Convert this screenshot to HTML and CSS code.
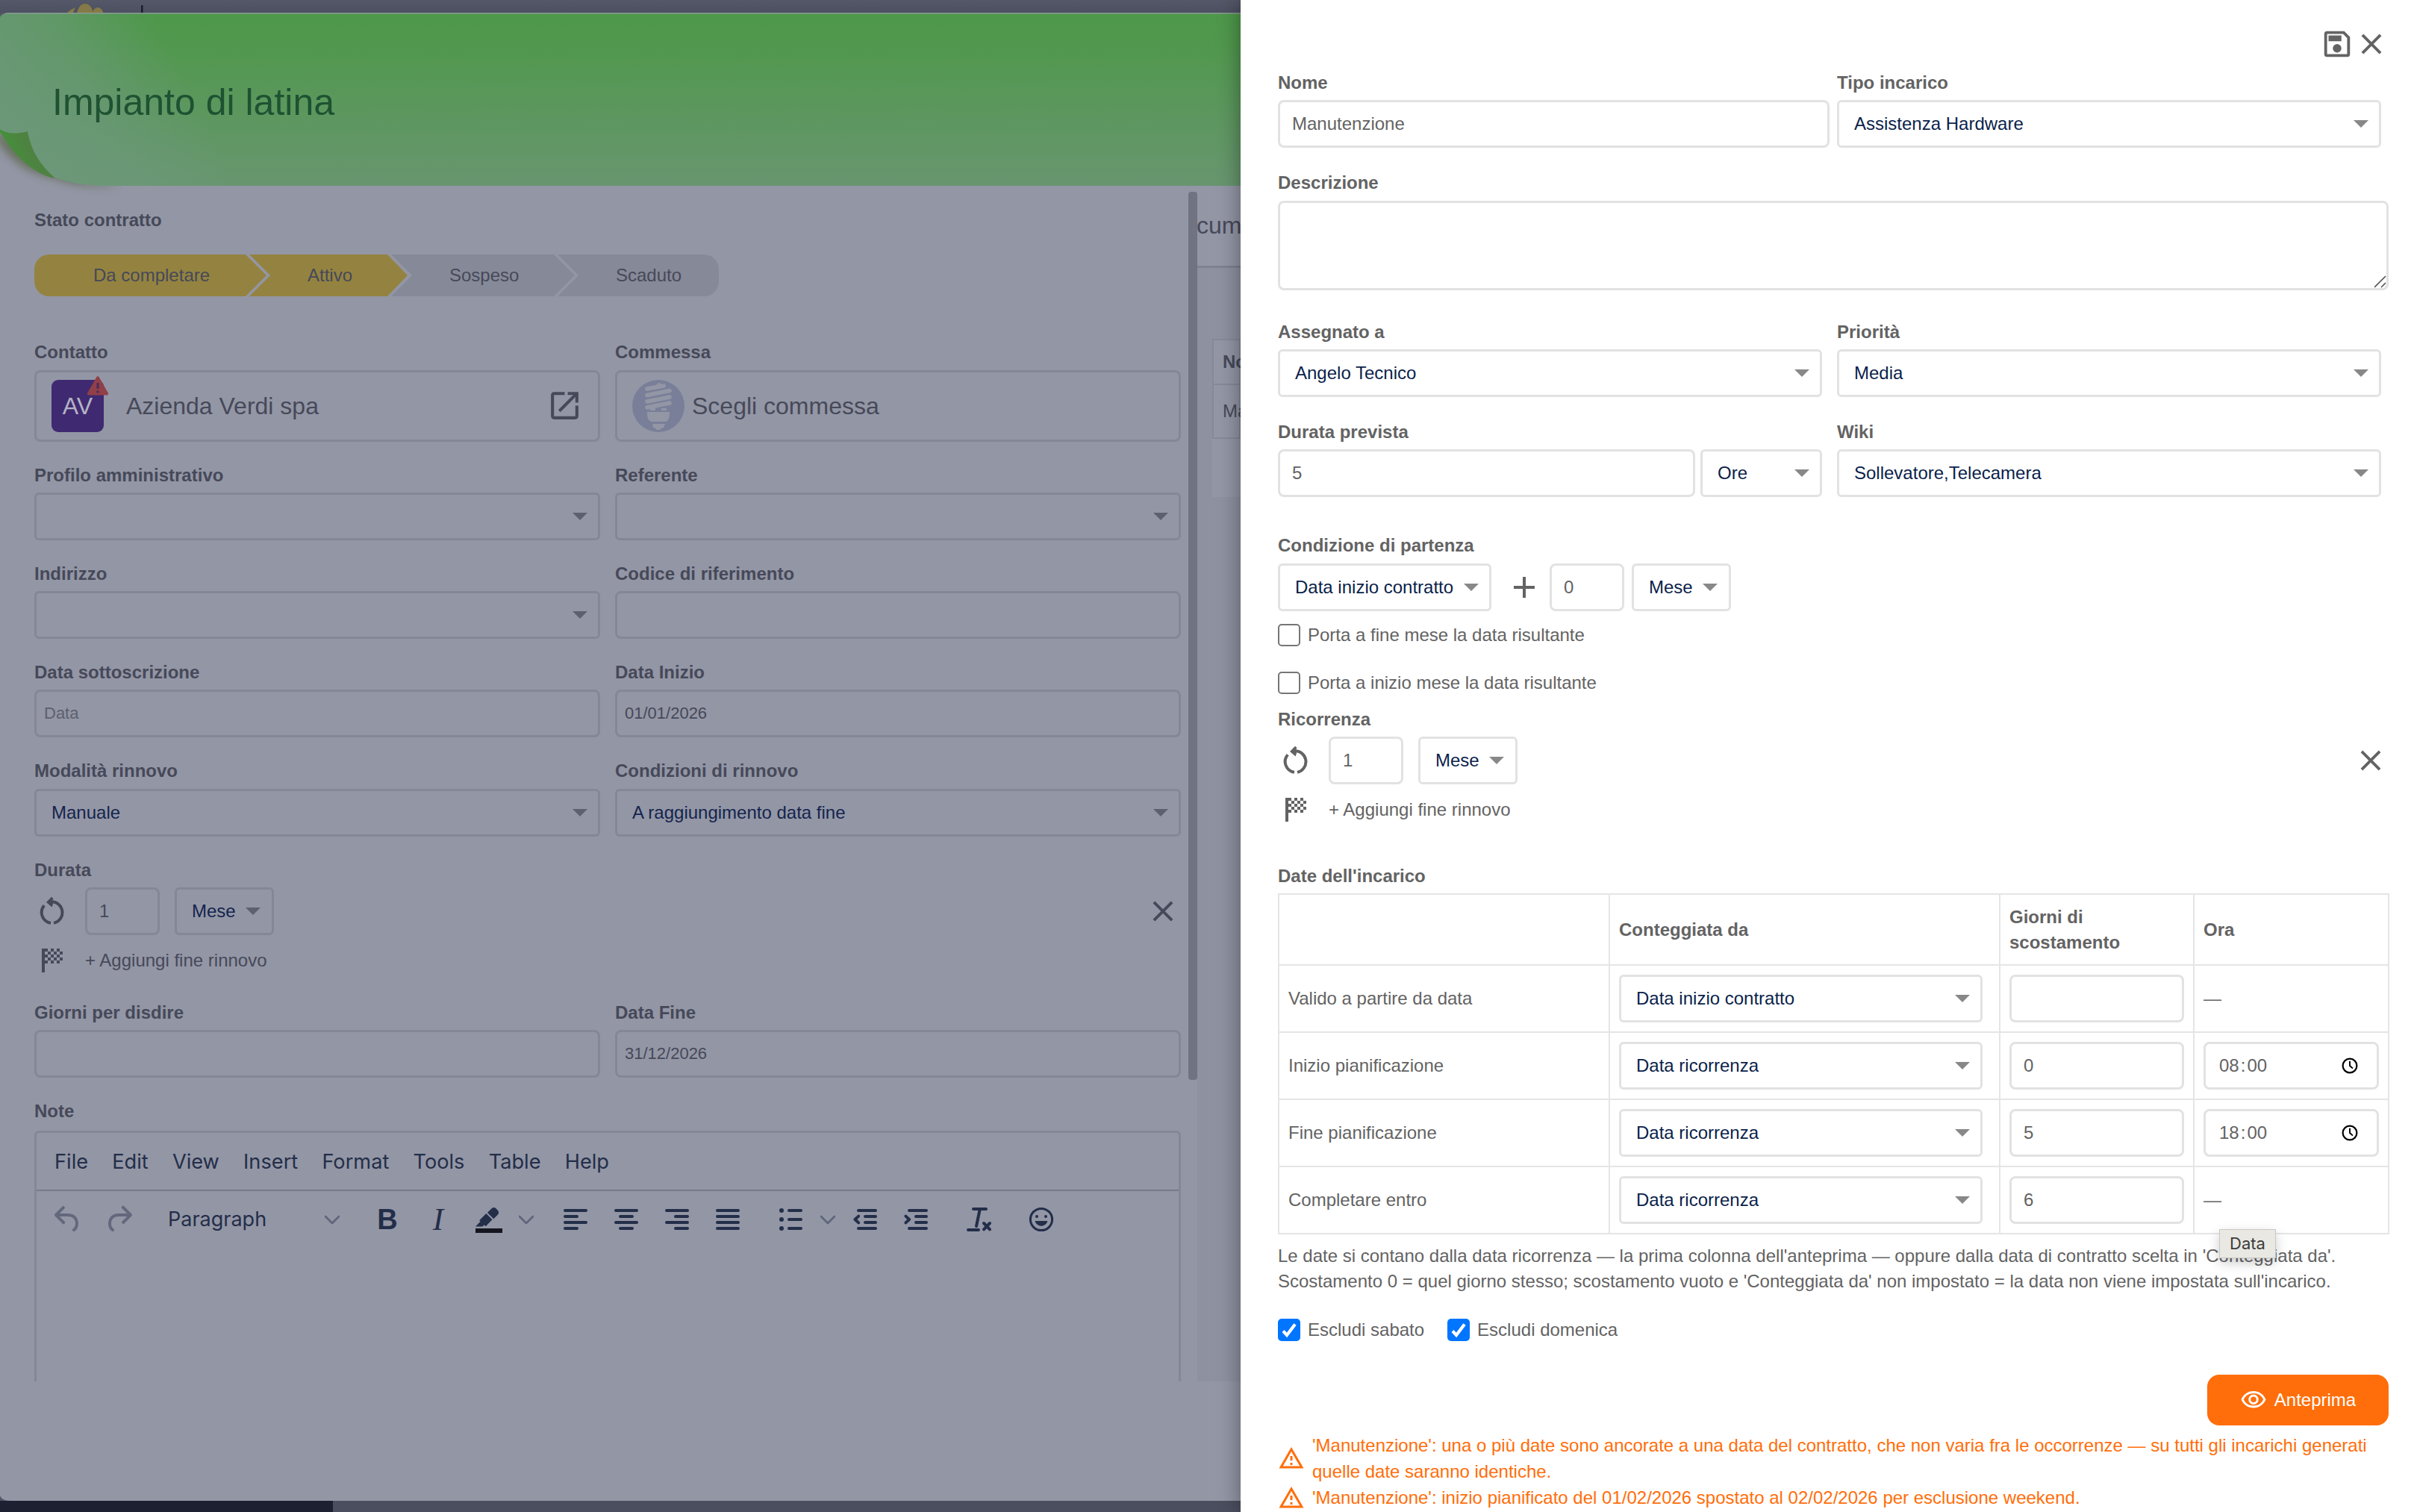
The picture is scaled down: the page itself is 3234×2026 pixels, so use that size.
FILE: index.html
```html
<!DOCTYPE html>
<html lang="it">
<head>
    <meta charset="UTF-8">
    <meta name="viewport" content="width=device-width, initial-scale=1.0">
    <title>Impianto di latina</title>
    <link rel="stylesheet" href="styles.css">
</head>
<body>
    <svg class="sprite">
        <symbol id="i-close" viewBox="0 0 24 24"><path d="M19 6.41 17.59 5 12 10.59 6.41 5 5 6.41 10.59 12 5 17.59 6.41 19 12 13.41 17.59 19 19 17.59 13.41 12z"/></symbol>
        <symbol id="i-warning" viewBox="0 0 24 24"><path d="M12 5.99 19.53 19H4.47L12 5.99M12 2 1 21h22L12 2zm1 14h-2v2h2v-2zm0-6h-2v4h2v-4z"/></symbol>
        <symbol id="i-refresh" viewBox="0 0 48 48">
            <path d="M23 11.3A14.4 14.4 0 0 1 26 39.8M22 39.8A14.4 14.4 0 0 1 13.2 16.2" fill="none" stroke="currentColor" stroke-width="4"/>
            <path d="M16 12 23 4.8l2.6 2.4-1.6 2.4 1 4.6-1.4 4.2z"/>
        </symbol>
        <symbol id="i-flag" viewBox="0 0 48 48">
            <path d="M10 8h4v32h-4z"/>
            <path d="M14 10h24M18 14h20M14 18h24M18 22h20M14 26h24" fill="none" stroke="currentColor" stroke-width="4" stroke-dasharray="4 4"/>
        </symbol>
        <symbol id="i-chevron" viewBox="0 0 20 20"><path d="m1 6 9 9 9-9" fill="none" stroke="currentColor" stroke-width="2.8" stroke-linecap="round" stroke-linejoin="round"/></symbol>
        <symbol id="i-clock" viewBox="0 0 22 22">
            <circle cx="11" cy="11" r="9.4" fill="none" stroke="currentColor" stroke-width="2.2"/>
            <path d="M11 4.8V11l4 3.6" fill="none" stroke="currentColor" stroke-width="1.9"/>
        </symbol>
    </svg>

    <div class="page">
        <div class="behind">
            <div class="topbar">
                <svg width="200" height="17" viewBox="0 0 200 17">
                    <g fill="#857a47">
                        <ellipse cx="114" cy="20" rx="11" ry="15"/>
                        <ellipse cx="131" cy="22" rx="8" ry="12"/>
                        <path d="M90 17l5-4 6-3-3 7z"/>
                    </g>
                    <path d="M189 7h2.5v10H189z" fill="#1a1d2d"/>
                </svg>
            </div>

            <div class="modal">
                <div class="modal-header">
                    <svg class="ribbon" width="1662" height="248" viewBox="0 0 1662 248">
                        <defs>
                            <linearGradient id="green" x1="0" y1="0" x2="0" y2="1">
                                <stop offset="0" stop-color="#4e984a"/>
                                <stop offset=".15" stop-color="#50984d"/>
                                <stop offset="1" stop-color="#68966f"/>
                            </linearGradient>
                            <linearGradient id="shine" gradientUnits="userSpaceOnUse" x1="0" y1="130" x2="215" y2="20">
                                <stop offset="0" stop-color="#6d987b" stop-opacity=".9"/>
                                <stop offset=".5" stop-color="#6d987b" stop-opacity=".6"/>
                                <stop offset="1" stop-color="#6d987b" stop-opacity="0"/>
                            </linearGradient>
                            <linearGradient id="fold" gradientUnits="userSpaceOnUse" x1="10" y1="200" x2="40" y2="185">
                                <stop offset="0" stop-color="#43943a"/>
                                <stop offset="1" stop-color="#4e8241"/>
                            </linearGradient>
                            <filter id="soft" x="-40%" y="-40%" width="180%" height="180%"><feGaussianBlur stdDeviation="6"/></filter>
                        </defs>
                        <path d="M-12 158C8 196 36 216 74 222C95 231 130 234 160 232L120 226 60 200 0 160z" fill="#4d5a30" opacity=".6" filter="url(#soft)"/>
                        <path d="M0 160C18 190 42 214 72 222L60 180 37 158 0 154z" fill="url(#fold)"/>
                        <path d="M0 1h1662v231H150C118 232 88 228 71 219 52 201 42 184 37 159 22 163 8 162 0 156z" fill="url(#green)"/>
                        <path d="M0 1h300v231H150C118 232 88 228 71 219 52 201 42 184 37 159 22 163 8 162 0 156z" fill="url(#shine)"/>
                        <path d="M0 0h1662v1.5H0z" fill="#8a9a96"/>
                    </svg>
                    <h1>Impianto di latina</h1>
                </div>

                <div class="modal-body">
                    <div class="contract">
                        <label>Stato contratto</label>
                        <div class="steps">
                            <svg width="917" height="56" viewBox="0 0 917 56">
                                <path d="M20 0h263l28 28-28 28H20A20 20 0 0 1 0 36V20A20 20 0 0 1 20 0z" fill="#948340"/>
                                <path d="M288 0h185l27 28-27 28H288l28-28z" fill="#948340"/>
                                <path d="M478 0h218l28 28-28 28H478l28-28z" fill="#868998"/>
                                <path d="M701 0h196a20 20 0 0 1 20 20v16a20 20 0 0 1-20 20H701l28-28z" fill="#868998"/>
                            </svg>
                            <span class="s1">Da completare</span>
                            <span class="s2">Attivo</span>
                            <span class="s3">Sospeso</span>
                            <span class="s4">Scaduto</span>
                        </div>

                        <div class="pair">
                            <div class="field">
                                <label>Contatto</label>
                                <div class="box card">
                                    <div class="avatar">AV
                                        <svg class="alert" width="30" height="26" viewBox="0 0 30 26">
                                            <path d="M13.2 1.5a2 2 0 0 1 3.6 0l12 21a2 2 0 0 1-1.8 3H3a2 2 0 0 1-1.8-3z" fill="#913f49"/>
                                            <path d="M13.5 9h3v8h-3zM13.5 19.5h3v3h-3z" fill="#4a2a5c"/>
                                        </svg>
                                    </div>
                                    <span class="card-name">Azienda Verdi spa</span>
                                    <svg class="open" width="49" height="49" viewBox="0 0 24 24"><path d="M19 19H5V5h7V3H5c-1.11 0-2 .9-2 2v14c0 1.1.89 2 2 2h14c1.1 0 2-.9 2-2v-7h-2v7zM14 3v2h3.59l-9.83 9.83 1.41 1.41L19 6.41V10h2V3h-7z"/></svg>
                                </div>
                            </div>
                            <div class="field">
                                <label>Commessa</label>
                                <div class="box card">
                                    <svg width="70" height="70" viewBox="0 0 70 70">
                                        <circle cx="35" cy="35" r="35" fill="#7a7f99"/>
                                        <g stroke="#9396a5" stroke-width="5.6" stroke-linecap="round" fill="#9396a5">
                                            <path d="M20 12 42 8M20 20.5 50 14.5M20 29 50 23M20 37 50 31"/>
                                            <path d="M31 6.5 36 4l6 3z" stroke="none"/>
                                            <path d="M24 38h7v3h-7zM39 38h7v3h-7z" stroke="none"/>
                                            <path d="M20 43h30v3c0 6-3 10-5 10H26c-3 0-6-4-6-10z" stroke="none"/>
                                            <path d="M27 59h17l-2 5-3 1-2 2h-4l-2-2-3-1z" stroke="none"/>
                                        </g>
                                    </svg>
                                    <span class="card-name near">Scegli commessa</span>
                                </div>
                            </div>
                        </div>

                        <div class="pair">
                            <div class="field"><label>Profilo amministrativo</label><div class="box select"><i class="caret"></i></div></div>
                            <div class="field"><label>Referente</label><div class="box select"><i class="caret"></i></div></div>
                        </div>
                        <div class="pair">
                            <div class="field"><label>Indirizzo</label><div class="box select"><i class="caret"></i></div></div>
                            <div class="field"><label>Codice di riferimento</label><div class="box input"></div></div>
                        </div>
                        <div class="pair">
                            <div class="field"><label>Data sottoscrizione</label><div class="box input date placeholder">Data</div></div>
                            <div class="field"><label>Data Inizio</label><div class="box input date">01/01/2026</div></div>
                        </div>
                        <div class="pair">
                            <div class="field"><label>Modalità rinnovo</label><div class="box select">Manuale<i class="caret"></i></div></div>
                            <div class="field"><label>Condizioni di rinnovo</label><div class="box select">A raggiungimento data fine<i class="caret"></i></div></div>
                        </div>

                        <label>Durata</label>
                        <div class="recur">
                            <svg class="ico"><use href="#i-refresh"/></svg>
                            <div class="box input short">1</div>
                            <div class="box select unit">Mese<i class="caret"></i></div>
                            <svg class="ico remove"><use href="#i-close"/></svg>
                        </div>
                        <div class="recur-end">
                            <svg class="ico"><use href="#i-flag"/></svg>
                            <span>+ Aggiungi fine rinnovo</span>
                        </div>

                        <div class="pair">
                            <div class="field"><label>Giorni per disdire</label><div class="box input"></div></div>
                            <div class="field"><label>Data Fine</label><div class="box input date">31/12/2026</div></div>
                        </div>

                        <label>Note</label>
                        <div class="editor">
                            <div class="menubar">
                                <span>File</span><span>Edit</span><span>View</span><span>Insert</span><span>Format</span><span>Tools</span><span>Table</span><span>Help</span>
                            </div>
                            <div class="toolbar">
                                <div class="tb off"><svg viewBox="0 0 24 24"><path d="M6.4 8H12c3.7 0 6.2 2 6.8 5.1.6 2.7-.4 5.6-2.3 6.8a1 1 0 0 1-1-1.8c1.1-.6 1.8-2.7 1.4-4.6-.5-2.1-2.1-3.5-4.9-3.5H6.4l3.3 3.3a1 1 0 1 1-1.4 1.4l-5-5a1 1 0 0 1 0-1.4l5-5a1 1 0 0 1 1.4 1.4L6.4 8Z"/></svg></div>
                                <div class="tb off"><svg viewBox="0 0 24 24"><path d="M17.6 10H12c-2.8 0-4.4 1.4-4.9 3.5-.4 2 .3 4 1.4 4.6a1 1 0 1 1-1 1.8c-2-1.2-2.9-4.1-2.3-6.8.6-3 3-5.1 6.8-5.1h5.6l-3.3-3.3a1 1 0 1 1 1.4-1.4l5 5a1 1 0 0 1 0 1.4l-5 5a1 1 0 0 1-1.4-1.4l3.3-3.3Z"/></svg></div>
                                <div class="format">Paragraph<svg class="chev"><use href="#i-chevron"/></svg></div>
                                <div class="tb gap bold">B</div>
                                <div class="tb italic">I</div>
                                <div class="tb"><svg viewBox="0 0 24 24"><path d="M3 18h18v3H3z" fill="#14151f"/><path d="M7.7 16.7H3l3.3-3.3-.7-.8L10.2 8l4 4.1-4 4.2c-.2.2-.6.2-.8 0l-.6-.7-1.1 1.1zm5-7.5L11 7.4l3-2.9a2 2 0 0 1 2.6 0L18 6c.7.7.7 2 0 2.7l-2.9 2.9-1.8-1.8-.5-.6z"/></svg></div>
                                <div class="tb drop"><svg class="chev"><use href="#i-chevron"/></svg></div>
                                <div class="tb gap"><svg viewBox="0 0 24 24"><path class="ln" d="M5 6h14M5 10h8M5 14h14M5 18h8"/></svg></div>
                                <div class="tb"><svg viewBox="0 0 24 24"><path class="ln" d="M5 6h14M8 10h8M5 14h14M8 18h8"/></svg></div>
                                <div class="tb"><svg viewBox="0 0 24 24"><path class="ln" d="M5 6h14M11 10h8M5 14h14M11 18h8"/></svg></div>
                                <div class="tb"><svg viewBox="0 0 24 24"><path class="ln" d="M5 6h14M5 10h14M5 14h14M5 18h14"/></svg></div>
                                <div class="tb gap"><svg viewBox="0 0 24 24"><path class="ln" d="M11 6h8M11 12h8M11 18h8"/><circle cx="6" cy="6" r="1.5"/><circle cx="6" cy="12" r="1.5"/><circle cx="6" cy="18" r="1.5"/></svg></div>
                                <div class="tb drop"><svg class="chev"><use href="#i-chevron"/></svg></div>
                                <div class="tb"><svg viewBox="0 0 24 24"><path class="ln" d="M7.5 6H19M12 10h7M12 14h7M7.5 18H19M7.6 9.8 5.2 12l2.4 2.2"/></svg></div>
                                <div class="tb"><svg viewBox="0 0 24 24"><path class="ln" d="M7.5 6H19M12 10h7M12 14h7M7.5 18H19M5.2 9.8 7.6 12l-2.4 2.2"/></svg></div>
                                <div class="tb gap"><svg viewBox="0 0 24 24"><path class="ln" d="M8.5 5H17M12.8 5.5l-2.3 11M5 19h7M15.5 14.500l4 4.200M19.500 14.500l-4 4.200"/></svg></div>
                                <div class="tb gap"><svg viewBox="0 0 24 24"><circle cx="12" cy="12" r="7.3" fill="none" stroke="currentColor" stroke-width="1.5"/><circle cx="9" cy="10" r="1"/><circle cx="15" cy="10" r="1"/><path d="M7.8 13h8.4a4.3 4.3 0 0 1-8.4 0z"/></svg></div>
                            </div>
                        </div>
                        <div class="scrollbar"></div>
                    </div>

                    <div class="side">
                        <div class="tab">cum</div>
                        <div class="side-table">
                            <div class="cell head">Nome</div>
                            <div class="cell">Manutenzione</div>
                        </div>
                    </div>
                </div>
            </div>
            <div class="bottombar"></div>
        </div>

        <div class="drawer">
            <div class="actions">
                <svg width="46" height="46" viewBox="0 0 24 24"><path d="M17 3H5a2 2 0 0 0-2 2v14a2 2 0 0 0 2 2h14a2 2 0 0 0 2-2V7l-4-4zm2 16H5V5h11.17L19 7.83V19zm-7-7a3 3 0 1 0 0 6 3 3 0 0 0 0-6zM6 6h9v4H6z"/></svg>
                <svg width="46" height="46"><use href="#i-close"/></svg>
            </div>

            <div class="row r1">
                <div class="field w739"><label>Nome</label><div class="box input">Manutenzione</div></div>
                <div class="field w729"><label>Tipo incarico</label><div class="box select">Assistenza Hardware<i class="caret"></i></div></div>
            </div>
            <div class="row r2">
                <div class="field full"><label>Descrizione</label>
                    <div class="box textarea"><svg class="grip" width="16" height="17" viewBox="0 0 16 17"><path d="M0 16 15 1M9 16l6-6" stroke="#555" stroke-width="1.7"/></svg></div>
                </div>
            </div>
            <div class="row r3">
                <div class="field w729"><label>Assegnato a</label><div class="box select">Angelo Tecnico<i class="caret"></i></div></div>
                <div class="field w729"><label>Priorità</label><div class="box select">Media<i class="caret"></i></div></div>
            </div>
            <div class="row r4">
                <div class="field w729"><label>Durata prevista</label>
                    <div class="inline"><div class="box input grow">5</div><div class="box select hours">Ore<i class="caret"></i></div></div>
                </div>
                <div class="field w729"><label>Wiki</label><div class="box select">Sollevatore,Telecamera<i class="caret"></i></div></div>
            </div>

            <label class="start-label">Condizione di partenza</label>
            <div class="start">
                <div class="box select from">Data inizio contratto<i class="caret"></i></div>
                <svg class="ico plus" viewBox="0 0 24 24"><path d="M19 13h-6v6h-2v-6H5v-2h6V5h2v6h6v2z"/></svg>
                <div class="box input short">0</div>
                <div class="box select unit">Mese<i class="caret"></i></div>
            </div>
            <div class="check c1"><span class="tick"></span>Porta a fine mese la data risultante</div>
            <div class="check c2"><span class="tick"></span>Porta a inizio mese la data risultante</div>

            <label>Ricorrenza</label>
            <div class="recur">
                <svg class="ico"><use href="#i-refresh"/></svg>
                <div class="box input short">1</div>
                <div class="box select unit">Mese<i class="caret"></i></div>
                <svg class="ico remove"><use href="#i-close"/></svg>
            </div>
            <div class="recur-end">
                <svg class="ico"><use href="#i-flag"/></svg>
                <span>+ Aggiungi fine rinnovo</span>
            </div>

            <label>Date dell'incarico</label>
            <table class="dates">
                <colgroup><col class="k1"><col class="k2"><col class="k3"><col class="k4"></colgroup>
                <tr><th></th><th>Conteggiata da</th><th>Giorni di scostamento</th><th>Ora</th></tr>
                <tr>
                    <td>Valido a partire da data</td>
                    <td><div class="box select from-date">Data inizio contratto<i class="caret"></i></div></td>
                    <td><div class="box input"></div></td>
                    <td>—</td>
                </tr>
                <tr>
                    <td>Inizio pianificazione</td>
                    <td><div class="box select from-date">Data ricorrenza<i class="caret"></i></div></td>
                    <td><div class="box input">0</div></td>
                    <td><div class="box input time"><span>08<b>:</b>00</span><svg width="22" height="22"><use href="#i-clock"/></svg></div></td>
                </tr>
                <tr>
                    <td>Fine pianificazione</td>
                    <td><div class="box select from-date">Data ricorrenza<i class="caret"></i></div></td>
                    <td><div class="box input">5</div></td>
                    <td><div class="box input time"><span>18<b>:</b>00</span><svg width="22" height="22"><use href="#i-clock"/></svg></div></td>
                </tr>
                <tr>
                    <td>Completare entro</td>
                    <td><div class="box select from-date">Data ricorrenza<i class="caret"></i></div></td>
                    <td><div class="box input">6</div></td>
                    <td>—</td>
                </tr>
            </table>
            <p class="hint">Le date si contano dalla data ricorrenza — la prima colonna dell'anteprima — oppure dalla data di contratto scelta in 'Conteggiata da'.<br>Scostamento 0 = quel giorno stesso; scostamento vuoto e 'Conteggiata da' non impostato = la data non viene impostata sull'incarico.</p>

            <div class="excludes">
                <div class="check"><span class="tick on"><svg viewBox="0 0 30 30"><path d="M7 16.5 12 22 23 7.5" fill="none" stroke="#fff" stroke-width="4.2"/></svg></span>Escludi sabato</div>
                <div class="check"><span class="tick on"><svg viewBox="0 0 30 30"><path d="M7 16.5 12 22 23 7.5" fill="none" stroke="#fff" stroke-width="4.2"/></svg></span>Escludi domenica</div>
            </div>

            <button class="preview">
                <svg width="36" height="36" viewBox="0 0 24 24"><path d="M12 6a9.77 9.77 0 0 1 8.82 5.5 9.76 9.76 0 0 1-17.64 0A9.77 9.77 0 0 1 12 6m0-2C7 4 2.73 7.11 1 11.5 2.73 15.89 7 19 12 19s9.27-3.11 11-7.5C21.27 7.11 17 4 12 4zm0 5a2.5 2.5 0 0 1 0 5 2.5 2.5 0 0 1 0-5m0-2a4.5 4.5 0 1 0 0 9 4.5 4.5 0 0 0 0-9z"/></svg>
                Anteprima
            </button>

            <div class="warnings">
                <div class="warn"><svg><use href="#i-warning"/></svg><span>'Manutenzione': una o più date sono ancorate a una data del contratto, che non varia fra le occorrenze — su tutti gli incarichi generati quelle date saranno identiche.</span></div>
                <div class="warn"><svg><use href="#i-warning"/></svg><span>'Manutenzione': inizio pianificato del 01/02/2026 spostato al 02/02/2026 per esclusione weekend.</span></div>
            </div>

            <div class="tooltip">Data</div>
        </div>
    </div>
</body>
</html>
```

FILE: styles.css
```css
* {
    box-sizing: border-box;
}

body {
    margin: 0;
    font-family: "Liberation Sans", Arial, sans-serif;
    font-size: 24px;
    line-height: 34px;
    color: #636363;
    overflow: hidden;
}

.sprite {
    position: absolute;
    width: 0;
    height: 0;
}

svg {
    display: block;
    flex: none;
    fill: currentColor;
}

label {
    display: block;
    height: 34px;
    margin-bottom: 6px;
    font-weight: bold;
}

.page {
    display: flex;
    width: 3234px;
    height: 2026px;
    overflow: hidden;
}

/* dimmed contract behind the drawer */
.behind {
    width: 1662px;
    background: #535666;
    color: #464959;
}

.topbar {
    height: 17px;
    background: linear-gradient(#555868, #4d5060);
}

.topbar svg {
    overflow: hidden;
}

.bottombar {
    height: 15px;
    background: linear-gradient(90deg, #1d2030 446px, #4b4e5e 446px);
}

.modal {
    height: 1994px;
    background: #9396a5;
    border-radius: 13px 0 0 13px / 8px 0 0 8px;
    overflow: hidden;
}

.modal-header {
    display: flex;
    align-items: center;
    height: 232px;
    padding-left: 70px;
}

.ribbon {
    position: absolute;
    left: 0;
    top: 17px;
    border-top-left-radius: 13px 8px;
}

.modal-header h1 {
    position: relative;
    margin: 8px 0 0;
    font-size: 50px;
    font-weight: normal;
    line-height: 60px;
    color: #1e5232;
}

.modal-body {
    display: flex;
    height: 1602px;
}

.contract {
    position: relative;
    width: 1604px;
    height: 1602px;
    padding: 28px 22px 0 46px;
    overflow: hidden;
}

.contract label {
    height: 34.25px;
    margin-bottom: 7px;
    line-height: 35px;
}

.scrollbar {
    position: absolute;
    top: 8px;
    right: 0;
    width: 12px;
    height: 1190px;
    border-radius: 4px;
    background: #707382;
}

.steps {
    position: relative;
    height: 56px;
    margin: 30px 0 57px;
    line-height: 56px;
}

.steps svg {
    position: absolute;
}

.steps span {
    position: absolute;
}

.s1 { left: 79px; }
.s2 { left: 366px; }
.s3 { left: 556px; }
.s4 { left: 779px; }

.pair {
    display: flex;
    gap: 20px;
    margin-bottom: 27px;
}

.pair .field {
    flex: 1;
}

.box {
    display: flex;
    align-items: center;
    height: 64px;
    border: 3px solid #e2e2e2;
    border-radius: 8px;
    white-space: nowrap;
}

.behind .box {
    border-color: #848796;
}

.input {
    padding-left: 16px;
}

.select {
    justify-content: space-between;
    padding: 0 14px 0 20px;
    border-radius: 6px;
    color: #0b1f4b;
}

.behind .select {
    color: #14254e;
}

.date {
    padding-left: 10px;
    font-size: 22px;
}

.placeholder {
    color: #5d6070;
}

.caret {
    width: 0;
    height: 0;
    margin-left: auto;
    border: 10px solid transparent;
    border-top-color: #888;
    border-bottom: 0;
}

.behind .caret {
    border-top-color: #5d606f;
}

.card {
    height: 96px;
    padding: 0 20px;
    font-size: 32px;
}

.avatar {
    position: relative;
    width: 70px;
    height: 70px;
    border-radius: 9px;
    background: #3f2a71;
    color: #b6b3c5;
    line-height: 70px;
    text-align: center;
}

.alert {
    position: absolute;
    top: -5px;
    right: -7px;
}

.card-name {
    margin-left: 30px;
}

.card-name.near {
    margin-left: 10px;
}

.open {
    margin-left: auto;
}

.ico {
    width: 48px;
    height: 48px;
}

.recur {
    display: flex;
    align-items: center;
    height: 64px;
}

.recur .short,
.start .short {
    width: 100px;
}

.recur .short {
    margin: 0 20px;
}

.unit {
    width: 133px;
    padding-right: 15px;
}

.recur .remove {
    width: 46px;
    height: 46px;
    margin-left: auto;
    margin-right: 1px;
}

.recur-end {
    display: flex;
    align-items: center;
    gap: 20px;
    height: 34px;
    margin: 17px 0 35px;
}

.editor {
    height: 400px;
    margin-top: 10px;
    border: 3px solid #848796;
    border-radius: 6px;
    color: #232e49;
    font-family: Inter, sans-serif;
}

.menubar {
    display: flex;
    gap: 32.2px;
    height: 78px;
    padding-left: 24px;
    border-bottom: 2px solid #787b8b;
    font-size: 27.2px;
    line-height: 78px;
}

.toolbar {
    display: flex;
    align-items: center;
    height: 76px;
    padding-left: 8px;
}

.tb {
    display: flex;
    align-items: center;
    justify-content: center;
    width: 68px;
    height: 48px;
}

.tb svg {
    width: 48px;
    height: 48px;
}

.tb.gap {
    margin-left: 16px;
}

.tb.drop {
    width: 32px;
}

.tb .chev,
.format .chev {
    width: 20px;
    height: 20px;
    color: #5f657b;
}

.off {
    color: #63687c;
}

.ln {
    fill: none;
    stroke: currentColor;
    stroke-width: 2;
    stroke-linecap: round;
    stroke-linejoin: round;
}

.bold {
    font-family: "Liberation Sans", Arial, sans-serif;
    font-size: 38px;
    font-weight: bold;
}

.italic {
    font-family: "Liberation Serif", serif;
    font-size: 43px;
    font-style: italic;
}

.format {
    display: flex;
    align-items: center;
    justify-content: space-between;
    width: 260px;
    margin-left: 16px;
    padding: 0 14px 0 16px;
    font-size: 27px;
}

.side {
    width: 58px;
    overflow: hidden;
    background: #8e91a0;
}

.tab {
    height: 110px;
    margin-left: -1px;
    padding-top: 36px;
    border-bottom: 3px solid #7f8291;
    background: #9396a5;
    font-size: 32px;
}

.side-table {
    height: 212px;
    margin: 95px 0 0 20px;
    background: #9396a5;
}

.cell {
    height: 72px;
    padding: 18px 0 0 12px;
    border: 2px solid #868998;
    border-top: 0;
}

.cell.head {
    height: 62px;
    padding-top: 12px;
    border-top: 2px solid #868998;
    font-weight: bold;
}

/* drawer */
.drawer {
    position: relative;
    width: 1572px;
    height: 2026px;
    padding: 36px 34px 0 50px;
    background: #fff;
    box-shadow: 0 0 28px rgba(0, 0, 0, 0.4);
}

.actions {
    display: flex;
    justify-content: flex-end;
    height: 46px;
}

.row {
    display: flex;
    justify-content: space-between;
    padding-right: 10px;
}

.r1 { margin-top: 12px; }
.r2 { margin-top: 30px; padding-right: 0; }
.r3 { margin-top: 39px; }
.r4 { margin-top: 30px; margin-bottom: 48px; }

.w739 { width: 739px; }
.w729 { width: 729px; }
.full { width: 100%; }

.textarea {
    position: relative;
    height: 120px;
    margin-top: 7px;
}

.grip {
    position: absolute;
    right: 0;
    bottom: 0;
}

.inline {
    display: flex;
    gap: 7px;
}

.grow {
    flex: 1;
}

.hours {
    width: 163px;
}

.start-label {
    margin-bottom: 7px;
}

.start {
    display: flex;
    align-items: center;
}

.from {
    width: 286px;
}

.plus {
    margin: 0 10px 0 20px;
}

.start .unit {
    margin-left: 10px;
}

.check {
    display: flex;
    align-items: center;
    gap: 10px;
    height: 30px;
}

.c1 { margin-top: 17px; }
.c2 { margin: 34px 0 17px; }

.tick {
    width: 30px;
    height: 30px;
    border: 2px solid #767676;
    border-radius: 5px;
}

.tick.on {
    border: 0;
    background: #0075ff;
}

.drawer .recur-end {
    margin-bottom: 55px;
}

.dates {
    width: 1487px;
    border-collapse: collapse;
    table-layout: fixed;
}

.k1 { width: 443px; }
.k2 { width: 523px; }
.k3 { width: 260px; }
.k4 { width: 261px; }

.dates th,
.dates td {
    height: 90px;
    padding: 0 12px;
    border: 2px solid #e5e5e5;
    text-align: left;
}

.dates th {
    height: 95px;
}

.from-date {
    width: 487px;
}

.time {
    justify-content: space-between;
    padding: 0 25px 0 18px;
    color: #636363;
}

.time b {
    margin: 0 2px;
    font-weight: normal;
}

.time svg {
    color: #000;
}

.hint {
    margin: 12px 0 32px;
    line-height: 34.3px;
    white-space: nowrap;
}

.excludes {
    display: flex;
    gap: 31px;
}

.preview {
    display: flex;
    align-items: center;
    justify-content: center;
    gap: 10px;
    width: 243px;
    height: 68px;
    margin: 45px 0 9px auto;
    padding: 0;
    border: 0;
    border-radius: 16px;
    background: #ff6e0a;
    color: #fff;
    font: inherit;
}

.warn {
    display: flex;
    align-items: center;
    gap: 10px;
    line-height: 35px;
    color: #ff6e0a;
}

.warn svg {
    width: 36px;
    height: 36px;
}

.tooltip {
    position: absolute;
    left: 1311px;
    top: 1647px;
    width: 76px;
    height: 39px;
    border: 1px solid #c9c8c4;
    background: #e9e8e3;
    box-shadow: 0 6px 16px rgba(0, 0, 0, 0.2);
    color: #3c3c3c;
    font-family: Inter, sans-serif;
    font-size: 22px;
    line-height: 37px;
    text-align: center;
}
```
